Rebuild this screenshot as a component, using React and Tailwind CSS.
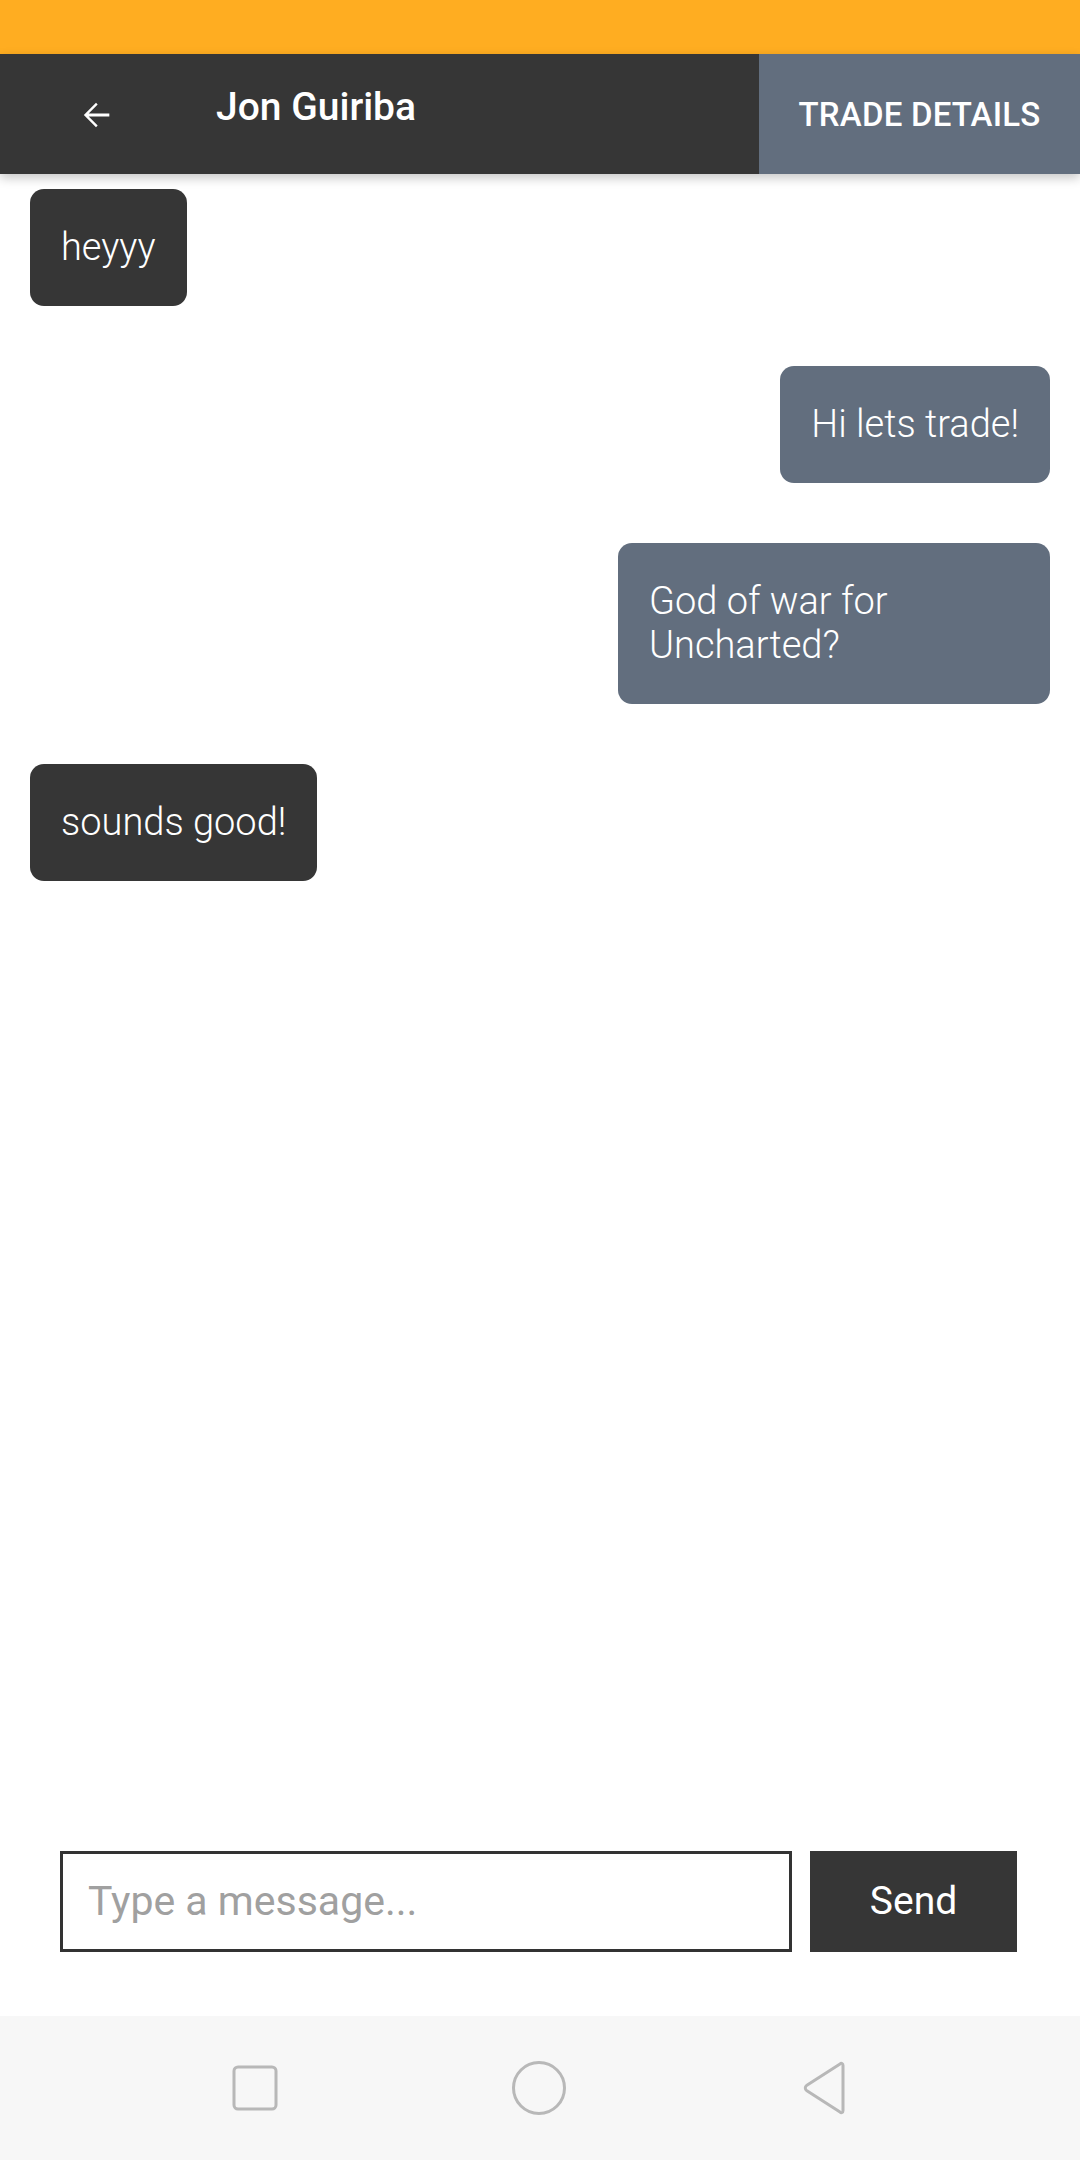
import React from "react";

const messages = [
  { id: 1, text: "heyyy", mine: false },
  { id: 2, text: "Hi lets trade!", mine: true },
  { id: 3, text: "God of war for Uncharted?", mine: true },
  { id: 4, text: "sounds good!", mine: false },
];

function BackArrow() {
  return (
    <svg width="40" height="40" viewBox="0 0 24 24" fill="#ffffff">
      <path d="M20 11.1H7.6l5.4-5.4-1-1L4.7 12l7.3 7.3 1-1-5.4-5.4H20z" />
    </svg>
  );
}

function NavBar() {
  return (
    <div className="h-[144px] bg-[#f7f7f7] flex items-center justify-center gap-[232px]">
      {/* recents */}
      <svg width="48" height="48" viewBox="0 0 48 48" fill="none">
        <rect x="3" y="3" width="42" height="42" rx="4" stroke="#b8b8b8" strokeWidth="3" />
      </svg>
      {/* home */}
      <svg width="56" height="56" viewBox="0 0 56 56" fill="none">
        <circle cx="28" cy="28" r="25.5" stroke="#b8b8b8" strokeWidth="3" />
      </svg>
      {/* back */}
      <svg width="50" height="56" viewBox="0 0 50 56" fill="none">
        <path
          d="M44 5.5c0-2-1.5-2.8-3-1.6L7.5 25.6c-1.6 1.2-1.6 3.6 0 4.8L41 52.1c1.5 1.2 3 .4 3-1.6z"
          stroke="#b8b8b8"
          strokeWidth="3"
          strokeLinejoin="round"
        />
      </svg>
    </div>
  );
}

export default function App() {
  return (
    <div
      className="w-[1080px] h-[2160px] flex flex-col bg-white"
      style={{ fontFamily: "Roboto, 'Noto Sans', sans-serif" }}
    >
      {/* status bar */}
      <div className="h-[54px] bg-[#ffad21]" />

      {/* header */}
      <div className="relative z-10 h-[120px] flex shadow-[0_4px_10px_rgba(0,0,0,0.22)]">
        <div className="flex-1 bg-[#363636] flex items-center">
          <div className="w-[192px] flex items-center pl-[76px] pt-[2px]">
            <BackArrow />
          </div>
          <div className="text-white text-[39px] font-medium leading-none -mt-[14px] pl-[24px]">
            Jon Guiriba
          </div>
        </div>
        <div className="w-[321px] bg-[#626e7e] flex items-center justify-center">
          <span className="text-white text-[33px] font-medium tracking-[0.2px] leading-none pt-[1px]">
            TRADE DETAILS
          </span>
        </div>
      </div>

      {/* messages */}
      <div className="flex-1 flex flex-col gap-[60px] px-[30px] pt-[15px]">
        {messages.map((m) => (
          <div key={m.id} className={m.mine ? "flex justify-end" : "flex justify-start"}>
            <div
              className={
                "max-w-[432px] rounded-[14px] px-[31px] pt-[36px] pb-[37px] text-white text-[38px] font-light leading-[44px] " +
                (m.mine ? "bg-[#626e7e]" : "bg-[#363636]")
              }
            >
              {m.text}
            </div>
          </div>
        ))}
      </div>

      {/* input row */}
      <div className="flex items-stretch gap-[18px] pl-[60px] pr-[63px] pb-[64px]">
        <div className="flex-1 h-[101px] border-[3px] border-[#333333] flex items-center pl-[25px]">
          <span className="text-[41px] text-[#a0a0a0] leading-none">Type a message...</span>
        </div>
        <button className="w-[207px] h-[101px] bg-[#363636] text-white text-[39px] leading-none">
          Send
        </button>
      </div>

      <NavBar />
    </div>
  );
}
